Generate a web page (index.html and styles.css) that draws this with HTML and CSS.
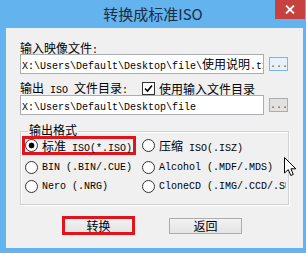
FILE: index.html
```html
<!DOCTYPE html>
<html>
<head>
<meta charset="UTF-8">
<title>转换成标准ISO</title>
<link rel="stylesheet" href="styles.css">
</head>
<body>

<div class="window">
  <div class="titlebar">
    <span class="title">转换成标准ISO</span>
    <span class="close">
      <svg width="10" height="9" viewBox="0 0 10 9"><path d="M1 0.5 L9 8.5 M9 0.5 L1 8.5" stroke="#fff" stroke-width="1.8"/></svg>
    </span>
  </div>

  <div class="client">
    <div class="label">输入映像文件<span class="en">:</span></div>
    <div class="row">
      <div class="field"><span class="en">X:\Users\Default\Desktop\file\</span>使用说明<span class="en">.txt</span></div>
      <button class="browse hot"><span class="en">...</span></button>
    </div>

    <div class="label label-check">
      <span>输出<span class="en"> ISO </span>文件目录<span class="en">:</span></span>
      <span class="checkbox">
        <svg width="11" height="11" viewBox="0 0 11 11"><path d="M2 5.5 L4.5 8 L9 2.5" fill="none" stroke="#000" stroke-width="1.6"/></svg>
      </span>
      <span>使用输入文件目录</span>
    </div>
    <div class="row">
      <div class="field"><span class="en">X:\Users\Default\Desktop\file</span></div>
      <button class="browse"><span class="en">...</span></button>
    </div>

    <div class="group">
      <span class="legend">输出格式</span>
      <div class="options">
        <div class="opt marked"><span class="radio checked"></span><span>标准<span class="en"> ISO(*.ISO)</span></span></div>
        <div class="opt col2"><span class="radio"></span><span>压缩<span class="en"> ISO(.ISZ)</span></span></div>
        <div class="opt"><span class="radio"></span><span class="en">BIN (.BIN/.CUE)</span></div>
        <div class="opt col2"><span class="radio"></span><span class="en">Alcohol (.MDF/.MDS)</span></div>
        <div class="opt"><span class="radio"></span><span class="en">Nero (.NRG)</span></div>
        <div class="opt col2"><span class="radio"></span><span class="en">CloneCD (.IMG/.CCD/.SUB)</span></div>
      </div>
    </div>

    <div class="actions">
      <button class="btn marked">转换</button>
      <button class="btn">返回</button>
    </div>
  </div>

  <svg class="cursor" width="13" height="20" viewBox="0 0 13 20"><path d="M0.5 0.5 L0.5 16 L4.3 12.6 L6.8 18.5 L9.3 17.4 L6.9 11.8 L11.8 11.8 Z" fill="#fff" stroke="#000" stroke-width="1"/></svg>
</div>

</body>
</html>
```

FILE: styles.css
```css
body {
  margin: 0;
  background-color: #62b3ee;
  font-family: "Noto Sans CJK SC", sans-serif;
  font-size: 12px;
  color: #000;
}
.window {
  position: relative;
  width: 306px;
  height: 253px;
  display: flex;
  flex-direction: column;
}
.titlebar {
  height: 28px;
  display: grid;
  grid-template-columns: 1fr auto 1fr;
  align-items: start;
}
.title {
  grid-column: 2;
  font-size: 15px;
  line-height: 28px;
  color: #1c2b3e;
}
.close {
  grid-column: 3;
  justify-self: end;
  width: 30px;
  height: 19px;
  margin-right: 1px;
  background-color: #c7423e;
  display: flex;
  align-items: center;
  justify-content: center;
}
.client {
  margin: 0 3px 0 6px;
  height: 220px;
  box-sizing: border-box;
  padding: 13px 14px 0;
  background-color: #f0f0f0;
}
.en {
  font-family: "Liberation Mono", monospace;
  font-size: 10px;
  white-space: pre;
}
.label {
  height: 13px;
  line-height: 13px;
  white-space: nowrap;
}
.label-check {
  display: flex;
  align-items: center;
  margin-top: 8px;
}
.checkbox {
  width: 13px;
  height: 13px;
  box-sizing: border-box;
  border: 1px solid #333;
  background-color: #fff;
  margin: 0 4px 0 14px;
  display: flex;
  align-items: center;
  justify-content: center;
}
.row {
  display: flex;
  align-items: center;
  gap: 5px;
}
.field {
  width: 244px;
  height: 20px;
  box-sizing: border-box;
  border: 1px solid #abadb3;
  background-color: #fff;
  padding-left: 1px;
  line-height: 18px;
  white-space: nowrap;
  overflow: hidden;
}
.browse {
  width: 19px;
  height: 14px;
  padding: 0;
  box-sizing: border-box;
  border: 1px solid #adadad;
  background-color: #e1e1e1;
  color: #555;
  line-height: 8px;
  overflow: hidden;
}
.browse.hot {
  border-color: #7eb4ea;
  background-color: #e5f1fb;
}
.group {
  position: relative;
  margin-top: 16px;
  height: 74px;
  box-sizing: border-box;
  border: 1px solid #d0d0d0;
  box-shadow: inset 1px 1px 0 #fff, 1px 1px 0 #fff;
  padding: 4px 0 0 1px;
}
.legend {
  position: absolute;
  top: -9px;
  left: 7px;
  padding: 0 1px;
  line-height: 13px;
  background-color: #f0f0f0;
}
.options {
  display: grid;
  grid-template-columns: 120px 1fr;
  grid-template-rows: 22px 19px 19px;
  margin-right: 2px;
  overflow: hidden;
}
.opt {
  justify-self: start;
  align-self: start;
  height: 19px;
  box-sizing: border-box;
  display: flex;
  align-items: center;
  padding-left: 3px;
  white-space: nowrap;
}
.opt.col2 {
  padding-left: 0;
}
.opt.marked {
  border: 3px solid #e2131b;
  padding: 0 1px 0 0;
}
.radio {
  width: 13px;
  height: 13px;
  box-sizing: border-box;
  border: 1px solid #333;
  border-radius: 50%;
  background-color: #fff;
  margin-right: 4px;
  flex: none;
}
.radio.checked {
  background: radial-gradient(circle, #000 0 2.6px, #fff 3.2px);
}
.actions {
  display: flex;
  align-items: center;
  gap: 34px;
  margin-top: 11px;
  padding-left: 42px;
}
.btn {
  width: 73px;
  height: 16px;
  box-sizing: border-box;
  padding: 0;
  border: 1px solid #acacac;
  background: linear-gradient(#f2f2f2, #e4e4e4);
  font: inherit;
  line-height: 13px;
  color: #000;
}
.btn.marked {
  height: 19px;
  border: 3px solid #e2131b;
}
.cursor {
  position: absolute;
  left: 284px;
  top: 157px;
}
```
